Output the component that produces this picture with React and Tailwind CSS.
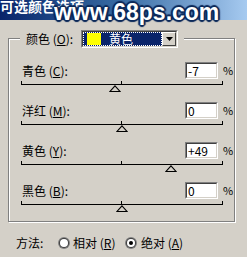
import React from "react";

const F = { fontFamily: '"Noto Sans CJK SC", "Noto Sans", sans-serif' };

function Input({ value }) {
  return (
    <div className="w-[33px] h-[17px] bg-white border border-t-[#808080] border-l-[#808080] border-r-white border-b-white">
      <div className="w-full h-full border border-t-[#404040] border-l-[#404040] border-r-[#d4d0c8] border-b-[#d4d0c8] flex items-center pl-[1px] text-[12px] leading-none text-black">
        {value}
      </div>
    </div>
  );
}

function Slider({ value }) {
  const center = 100.5 + value * 1.005;
  return (
    <div className="relative w-[202px] h-[13px] mt-[2px]">
      <div className="absolute left-0 top-0 w-px h-[3px] bg-black" />
      <div className="absolute left-[100px] top-0 w-px h-[3px] bg-black" />
      <div className="absolute left-[201px] top-0 w-px h-[3px] bg-black" />
      <div className="absolute left-0 top-[3px] w-[202px] h-px bg-black" />
      <svg
        className="absolute top-[4px]"
        style={{ left: Math.round(center - 5.5) }}
        width="12"
        height="8"
        viewBox="0 0 12 8"
      >
        <path d="M6 0.8 L11 6.5 L1 6.5 Z" fill="#d4d0c8" stroke="#000" strokeWidth="1.1" />
      </svg>
    </div>
  );
}

function Section({ label, letter, value, pos, first }) {
  return (
    <div className={first ? "" : "mt-[8px]"}>
      <div className="flex items-center h-[17px]">
        <div className="w-[164px] pl-[1px] text-[12px] leading-none text-black">
          {label} (<span className="underline">{letter}</span>):
        </div>
        <Input value={value} />
        <div className="ml-[5px] text-[11px] leading-none text-black">%</div>
      </div>
      <Slider value={pos} />
    </div>
  );
}

function Radio({ checked }) {
  return (
    <div className="w-[12px] h-[12px] rounded-full bg-[#808080] p-px">
      <div className="w-full h-full rounded-full bg-[#404040] p-px">
        <div className="w-full h-full rounded-full bg-white flex items-center justify-center">
          {checked && <div className="w-[4px] h-[4px] rounded-full bg-black" />}
        </div>
      </div>
    </div>
  );
}

export default function App() {
  return (
    <div className="relative w-[247px] h-[257px] bg-[#d4d0c8] overflow-hidden" style={F}>
      <div className="h-[20px] bg-gradient-to-r from-[#0a246a] via-[#3a6ea5] to-[#a6caf0] flex items-start">
        <div className="text-white font-bold text-[14px] leading-none -mt-[1px]">
          可选颜色选项
        </div>
      </div>

      <div
        className="absolute left-[54px] top-[1px] text-[23px] leading-[23px] font-bold text-white"
        style={{
          fontFamily: '"Liberation Sans", Arial, sans-serif',
          textShadow:
            "0 0 2px #0d2a5a, 1px 1px 1px #0d2a5a, -1px -1px 1px #0d2a5a, 1px -1px 1px #0d2a5a, -1px 1px 1px #0d2a5a, 2px 0 1px #0d2a5a, -2px 0 1px #0d2a5a, 0 2px 1px #0d2a5a, 0 -2px 1px #0d2a5a",
        }}
      >
        www.68ps.com
      </div>

      <div className="relative ml-[8px] mt-[18px] w-[227px] h-[184px] border border-[#808080] shadow-[inset_1px_1px_0_#fff,1px_1px_0_#fff] pt-[23px] pl-[12px]">
        <div className="absolute left-[11px] top-[-9px] w-[164px] h-[18px] bg-[#d4d0c8] flex items-center">
          <div className="ml-[6px] w-[55px] text-[12px] leading-none text-black">
            颜色 (<span className="underline">O</span>):
          </div>
          <div className="w-[97px] h-[18px] border border-t-[#808080] border-l-[#808080] border-r-white border-b-white">
            <div className="w-full h-full border border-t-[#404040] border-l-[#404040] border-r-[#d4d0c8] border-b-[#d4d0c8] flex bg-white">
              <div className="flex-1 bg-[#0a246a] flex items-center outline-1 outline-dotted outline-[#fff] -outline-offset-1">
                <div className="ml-[4px] w-[14px] h-[12px] bg-[#ffff00]" />
                <div className="ml-[8px] text-white text-[12px] leading-none">黄色</div>
              </div>
              <div className="w-[14px] h-full bg-[#d4d0c8] border border-t-white border-l-white border-r-[#404040] border-b-[#404040] flex items-center justify-center">
                <svg width="7" height="4" viewBox="0 0 7 4">
                  <path d="M0 0 H7 L3.5 4 Z" fill="#000" />
                </svg>
              </div>
            </div>
          </div>
        </div>

        <Section label="青色" letter="C" value="-7" pos={-7} first />
        <Section label="洋红" letter="M" value="0" pos={0} />
        <Section label="黄色" letter="Y" value="+49" pos={49} />
        <Section label="黑色" letter="B" value="0" pos={0} />
      </div>

      <div className="flex items-center h-[17px] mt-[12px] pl-[16px] text-[12px] leading-none text-black">
        <div className="w-[42px]">方法:</div>
        <Radio />
        <div className="ml-[3px] w-[52px]">
          相对 (<span className="underline">R</span>)
        </div>
        <Radio checked />
        <div className="ml-[4px]">
          绝对 (<span className="underline">A</span>)
        </div>
      </div>
    </div>
  );
}
